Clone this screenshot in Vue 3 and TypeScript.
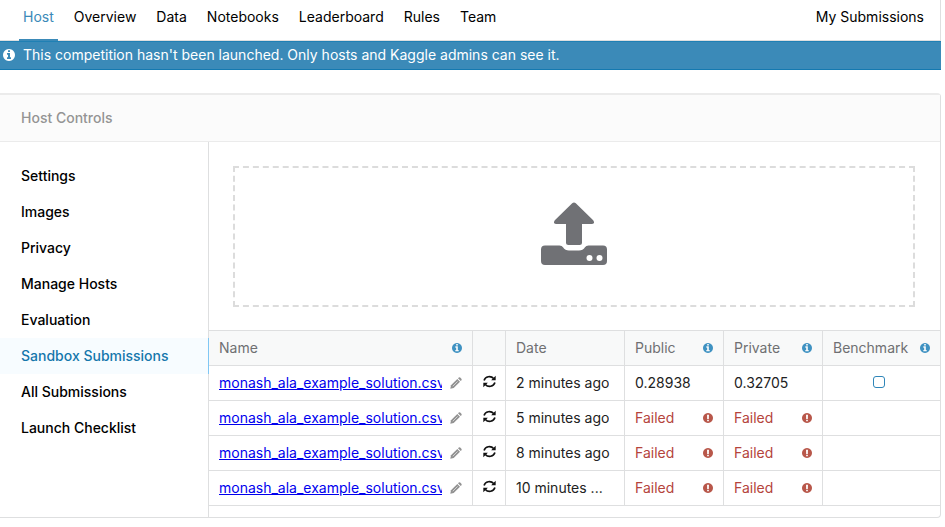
<script setup lang="ts">
import { ref } from 'vue'

interface Submission {
  id: number
  file: string
  date: string
  publicScore: string | null
  privateScore: string | null
}

const tabs: string[] = ['Host', 'Overview', 'Data', 'Notebooks', 'Leaderboard', 'Rules', 'Team']
const activeTab = 'Host'

const sections: string[] = [
  'Settings',
  'Images',
  'Privacy',
  'Manage Hosts',
  'Evaluation',
  'Sandbox Submissions',
  'All Submissions',
  'Launch Checklist',
]
const activeSection = ref('Sandbox Submissions')

const submissions: Submission[] = [
  { id: 1, file: 'monash_ala_example_solution.csv', date: '2 minutes ago', publicScore: '0.28938', privateScore: '0.32705' },
  { id: 2, file: 'monash_ala_example_solution.csv', date: '5 minutes ago', publicScore: null, privateScore: null },
  { id: 3, file: 'monash_ala_example_solution.csv', date: '8 minutes ago', publicScore: null, privateScore: null },
  { id: 4, file: 'monash_ala_example_solution.csv', date: '10 minutes ...', publicScore: null, privateScore: null },
]

const infoPath =
  'M1152 1376v-160q0-14-9-23t-23-9h-96v-512q0-14-9-23t-23-9h-320q-14 0-23 9t-9 23v160q0 14 9 23t23 9h96v320h-96q-14 0-23 9t-9 23v160q0 14 9 23t23 9h448q14 0 23-9t9-23zm-128-896v-160q0-14-9-23t-23-9h-192q-14 0-23 9t-9 23v160q0 14 9 23t23 9h192q14 0 23-9t9-23zm640 416q0 209-103 385.5t-279.5 279.5-385.5 103-385.5-103-279.5-279.5-103-385.5 103-385.5 279.5-279.5 385.5-103 385.5 103 279.5 279.5 103 385.5z'
const alertPath =
  'M896 128q209 0 385.5 103t279.5 279.5 103 385.5-103 385.5-279.5 279.5-385.5 103-385.5-103-279.5-279.5-103-385.5 103-385.5 279.5-279.5 385.5-103zm128 1247v-190q0-14-9-23.5t-22-9.5h-192q-13 0-23 10t-10 23v190q0 13 10 23t23 10h192q13 0 22-9.5t9-23.5zm-2-344l18-621q0-12-10-18-10-8-24-8h-220q-14 0-24 8-10 6-10 18l17 621q0 10 10 17.5t24 7.5h185q14 0 23.5-7.5t10.5-17.5z'
</script>

<template>
  <div class="page">
    <nav class="tabs">
      <a v-for="tab in tabs" :key="tab" href="#" class="tab" :class="{ active: tab === activeTab }">{{ tab }}</a>
      <a href="#" class="tab mine">My Submissions</a>
    </nav>

    <div class="banner">
      <svg class="banner-icon" viewBox="128 128 1536 1536"><path :d="infoPath" /></svg>
      <span>This competition hasn't been launched. Only hosts and Kaggle admins can see it.</span>
    </div>

    <section class="panel">
      <h2 class="panel-title">Host Controls</h2>
      <div class="panel-body">
        <nav class="side">
          <a
            v-for="item in sections"
            :key="item"
            href="#"
            class="side-item"
            :class="{ active: item === activeSection }"
            @click.prevent="activeSection = item"
          >{{ item }}</a>
        </nav>

        <div class="content">
          <button type="button" class="dropzone" aria-label="Upload submission">
            <svg class="upload" viewBox="0 0 66 64">
              <path d="M31.2 1.3 Q33 -.4 34.8 1.3 L52.2 18.3 Q54.4 21.8 51 22 H41 V40.5 Q41 43 38.5 43 H27.5 Q25 43 25 40.5 V22 H15 Q11.600 21.800 13.800 18.300 Z" />
              <path d="M4 43.500 H18.500 Q21 43.500 22 45.200 Q24.200 48.500 28 48.500 H38 Q41.800 48.500 44 45.200 Q45 43.500 47.500 43.500 H62 Q66 43.500 66 47.500 V59 Q66 63 62 63 H4 Q0 63 0 59 V47.500 Q0 43.500 4 43.500 Z" />
              <circle cx="48.500" cy="56" r="3" class="hole" />
              <circle cx="58.500" cy="56" r="3" class="hole" />
            </svg>
          </button>

          <table class="grid">
            <colgroup>
              <col />
              <col class="col-refresh" />
              <col class="col-date" />
              <col class="col-score" />
              <col class="col-score" />
              <col class="col-bench" />
            </colgroup>
            <thead>
              <tr>
                <th><div class="cell"><span>Name</span><svg class="mark info" viewBox="128 128 1536 1536"><path :d="infoPath" /></svg></div></th>
                <th></th>
                <th><div class="cell"><span>Date</span></div></th>
                <th><div class="cell"><span>Public</span><svg class="mark info" viewBox="128 128 1536 1536"><path :d="infoPath" /></svg></div></th>
                <th><div class="cell"><span>Private</span><svg class="mark info" viewBox="128 128 1536 1536"><path :d="infoPath" /></svg></div></th>
                <th><div class="cell"><span>Benchmark</span><svg class="mark info" viewBox="128 128 1536 1536"><path :d="infoPath" /></svg></div></th>
              </tr>
            </thead>
            <tbody>
              <tr v-for="row in submissions" :key="row.id">
                <td>
                  <div class="cell name">
                    <a href="#" class="file">{{ row.file }}</a>
                    <button type="button" class="icon-button" aria-label="Edit description">
                      <svg class="pencil" viewBox="0 0 12 12">
                        <path d="M.3 11.700 L1 8.300 L7.300 2 L10 4.700 L3.700 11 Z" />
                        <path d="M8 1.300 L8.800 .5 Q9.500 0 10.200 .6 L11.400 1.800 Q12 2.500 11.500 3.200 L10.700 4 Z" />
                        <path d="M2.800 9.200 L7.600 4.400" class="shine" />
                      </svg>
                    </button>
                  </div>
                </td>
                <td class="center">
                  <button type="button" class="icon-button" aria-label="Rescore">
                    <svg class="refresh" viewBox="0 0 12 12">
                      <path d="M1 5 A5 4.500 0 0 1 9.800 3.300 M11 7 A5 4.500 0 0 1 2.200 8.700" class="arc" />
                      <path d="M11.700 .7 V4.900 H7.500 Z M.3 11.300 V7.100 H4.500 Z" />
                    </svg>
                  </button>
                </td>
                <td><div class="cell"><span class="date">{{ row.date }}</span></div></td>
                <td v-for="(score, i) in [row.publicScore, row.privateScore]" :key="i">
                  <div v-if="score" class="cell"><span>{{ score }}</span></div>
                  <div v-else class="cell failed">
                    <span>Failed</span>
                    <svg class="mark" viewBox="128 128 1536 1536"><path :d="alertPath" /></svg>
                  </div>
                </td>
                <td class="center bench">
                  <input v-if="row.publicScore" type="checkbox" class="check" aria-label="Benchmark" />
                </td>
              </tr>
            </tbody>
          </table>
        </div>
      </div>
    </section>
  </div>
</template>

<style>
body {
  background: #fff;
}
</style>

<style scoped>
.page {
  margin-right: 4px;
  font-family: Inter, "Liberation Sans", sans-serif;
  font-size: 14px;
  line-height: 20px;
  color: #000;
}
.page * {
  box-sizing: border-box;
}
.tabs {
  display: flex;
  gap: 12px;
  height: 41px;
  padding: 0 12px 0 19px;
  border-right: 1px solid #dedfe0;
  border-bottom: 1px solid #dedfe0;
}
.tab {
  height: 41px;
  padding: 7px 4px 0;
  border-bottom: 2px solid transparent;
  color: #000;
  text-decoration: none;
}
.tab.active {
  color: #3b8ab8;
  border-bottom-color: #3b8ab8;
}
.mine {
  margin-left: auto;
}
.banner {
  display: flex;
  align-items: center;
  gap: 8px;
  height: 29px;
  padding: 0 0 1px 3px;
  background: #3b8ab8;
  border-top: 1px solid #2080b4;
  border-bottom: 1px solid #1479b0;
  color: #fff;
}
.banner-icon {
  width: 12px;
  height: 12px;
  fill: #fff;
}
.panel {
  margin-top: 23px;
  border: 1px solid #dedfe0;
  border-top: 2px solid #ebebeb;
  border-left: 0;
  border-radius: 0 4px 4px 0;
}
.panel-title {
  margin: 0;
  padding: 13px 21px;
  background: #fbfbfb;
  border-bottom: 1px solid #ebebeb;
  color: #949494;
  font-size: 14px;
  font-weight: 500;
  line-height: 20px;
}
.panel-body {
  display: flex;
}
.side {
  flex: none;
  width: 208px;
  padding-top: 16px;
}
.side-item {
  display: block;
  height: 36px;
  padding: 8px 21px;
  color: #000;
  font-weight: 500;
  text-decoration: none;
}
.side-item.active {
  background: #f7fcff;
  color: #1577ac;
  box-shadow: 1px 0 0 #80c7f4;
  position: relative;
}
.content {
  flex: 1;
  min-width: 0;
  padding: 24px 0 11px;
  border-left: 1px solid #dedfe0;
}
.dropzone {
  display: flex;
  align-items: center;
  justify-content: center;
  width: calc(100% - 49px);
  height: 141px;
  margin: 0 25px 23px 24px;
  padding: 0 0 5px;
  border: 2px dashed #dcdcdc;
  background: none;
}
.upload {
  width: 66px;
  height: 64px;
  fill: #707175;
}
.hole {
  fill: #fff;
}
.grid {
  width: 100%;
  table-layout: fixed;
  border-collapse: separate;
  border-spacing: 0;
  border-top: 1px solid #dedfe0;
  color: #222;
}
.col-refresh {
  width: 33px;
}
.col-date {
  width: 119px;
}
.col-score {
  width: 99px;
}
.col-bench {
  width: 117px;
}
.grid th,
.grid td {
  height: 35px;
  padding: 0;
  border-right: 1px solid #dedfe0;
  border-bottom: 1px solid #dedfe0;
  font-weight: 400;
  text-align: left;
}
.grid td {
  padding-bottom: 1px;
}
.grid th:last-child,
.grid td:last-child {
  border-right: 0;
}
.grid th {
  background: #f8f9f9;
  color: #6f7072;
}
.cell {
  display: flex;
  align-items: center;
  justify-content: space-between;
  padding: 0 10px;
}
.mark {
  flex: none;
  width: 10px;
  height: 10px;
  fill: #b8574a;
}
.mark.info {
  fill: #3f92c2;
}
.name {
  gap: 8px;
}
.file {
  flex: 1;
  overflow: hidden;
  color: #0000ee;
  white-space: nowrap;
}
.date {
  overflow: hidden;
  text-overflow: ellipsis;
  white-space: nowrap;
}
.failed {
  color: #b5443c;
}
.grid .center {
  text-align: center;
}
.grid .bench {
  padding-right: 5px;
}
.icon-button {
  display: inline-flex;
  padding: 0;
  border: 0;
  background: none;
}
.pencil {
  width: 12px;
  height: 12px;
  fill: #929292;
}
.shine {
  fill: none;
  stroke: #fff;
  stroke-width: .6;
}
.refresh {
  width: 13px;
  height: 13px;
  fill: #111;
}
.arc {
  fill: none;
  stroke: #111;
  stroke-width: 1.500;
}
.check {
  appearance: none;
  width: 12px;
  height: 12px;
  margin: 0;
  border: 1px solid #2f86b9;
  border-radius: 3px;
  background: #fff;
}
</style>
